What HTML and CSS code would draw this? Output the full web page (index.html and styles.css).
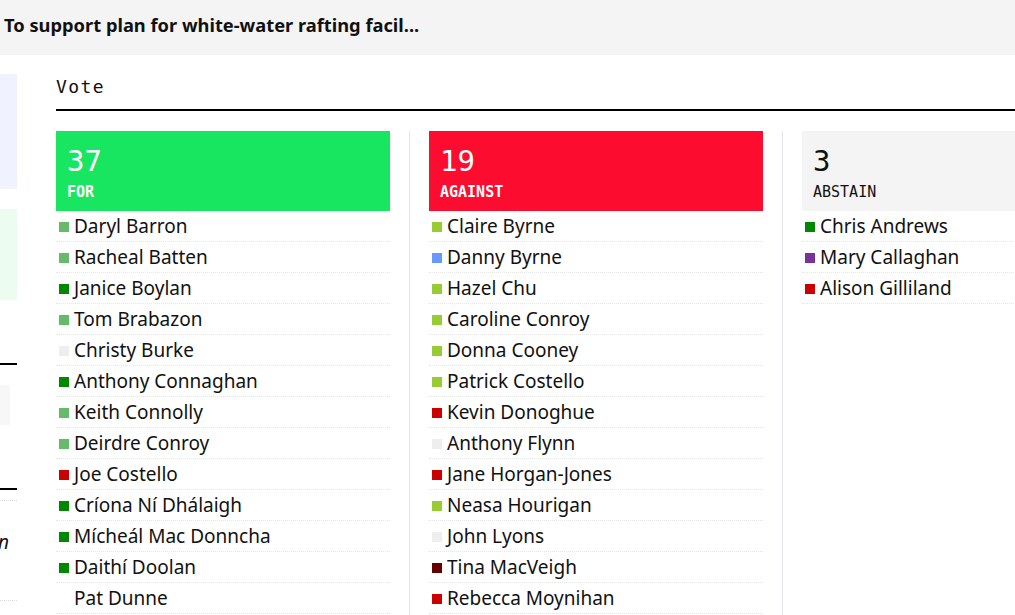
FILE: index.html
```html
<!DOCTYPE html>
<html lang="en">
<head>
<meta charset="utf-8">
<title>Vote</title>
<link rel="stylesheet" href="styles.css">
</head>
<body>
<header class="topbar">
  <h1 class="topbar-title">To support plan for white-water rafting facil...</h1>
</header>
<div class="layout">
  <aside class="side">
    <div class="side-inner">
      <div class="side-box side-box-blue"></div>
      <div class="side-box side-box-green"></div>
      <div class="side-rule"></div>
      <div class="side-chip"></div>
      <div class="side-rule side-rule-2"></div>
      <div class="side-item"><span class="side-text">Councillor Dublin</span></div>
      <div class="side-item side-item-empty"></div>
    </div>
  </aside>
  <main class="content">
    <h2 class="vote-title">Vote</h2>
    <div class="cols">
      <section class="col">
        <div class="col-head head-for">
          <div class="count">37</div>
          <div class="label">FOR</div>
        </div>
        <ul class="names">
          <li class="name"><span class="mark m-lgreen"></span>Daryl Barron</li>
          <li class="name"><span class="mark m-lgreen"></span>Racheal Batten</li>
          <li class="name"><span class="mark m-dgreen"></span>Janice Boylan</li>
          <li class="name"><span class="mark m-lgreen"></span>Tom Brabazon</li>
          <li class="name"><span class="mark m-gray"></span>Christy Burke</li>
          <li class="name"><span class="mark m-dgreen"></span>Anthony Connaghan</li>
          <li class="name"><span class="mark m-lgreen"></span>Keith Connolly</li>
          <li class="name"><span class="mark m-lgreen"></span>Deirdre Conroy</li>
          <li class="name"><span class="mark m-red"></span>Joe Costello</li>
          <li class="name"><span class="mark m-dgreen"></span>Críona Ní Dhálaigh</li>
          <li class="name"><span class="mark m-dgreen"></span>Mícheál Mac Donncha</li>
          <li class="name"><span class="mark m-dgreen"></span>Daithí Doolan</li>
          <li class="name"><span class="mark m-none"></span>Pat Dunne</li>
        </ul>
      </section>
      <section class="col">
        <div class="col-head head-against">
          <div class="count">19</div>
          <div class="label">AGAINST</div>
        </div>
        <ul class="names">
          <li class="name"><span class="mark m-lime"></span>Claire Byrne</li>
          <li class="name"><span class="mark m-blue"></span>Danny Byrne</li>
          <li class="name"><span class="mark m-lime"></span>Hazel Chu</li>
          <li class="name"><span class="mark m-lime"></span>Caroline Conroy</li>
          <li class="name"><span class="mark m-lime"></span>Donna Cooney</li>
          <li class="name"><span class="mark m-lime"></span>Patrick Costello</li>
          <li class="name"><span class="mark m-red"></span>Kevin Donoghue</li>
          <li class="name"><span class="mark m-gray"></span>Anthony Flynn</li>
          <li class="name"><span class="mark m-red"></span>Jane Horgan-Jones</li>
          <li class="name"><span class="mark m-lime"></span>Neasa Hourigan</li>
          <li class="name"><span class="mark m-gray"></span>John Lyons</li>
          <li class="name"><span class="mark m-dred"></span>Tina MacVeigh</li>
          <li class="name"><span class="mark m-red"></span>Rebecca Moynihan</li>
        </ul>
      </section>
      <section class="col">
        <div class="col-head head-abstain">
          <div class="count">3</div>
          <div class="label">ABSTAIN</div>
        </div>
        <ul class="names">
          <li class="name"><span class="mark m-dgreen"></span>Chris Andrews</li>
          <li class="name"><span class="mark m-purple"></span>Mary Callaghan</li>
          <li class="name"><span class="mark m-red"></span>Alison Gilliland</li>
        </ul>
      </section>
    </div>
  </main>
</div>
</body>
</html>
```
FILE: styles.css
```css
html, body {
  margin: 0;
  padding: 0;
  background: #ffffff;
  overflow: hidden;
}
body {
  width: 1015px;
  height: 615px;
  font-family: "Noto Sans", "Liberation Sans", sans-serif;
  color: #111111;
}
.topbar {
  background: #f4f4f4;
  height: 55px;
  padding: 0 4px;
  display: flex;
  align-items: center;
}
.topbar-title {
  margin: 0 0 7px 0;
  font-size: 18.3px;
  font-weight: 700;
  color: #111;
  white-space: nowrap;
}
.layout {
  display: flex;
  align-items: flex-start;
}
.side {
  width: 17px;
  flex: 0 0 17px;
  overflow: hidden;
  margin-right: 39px;
  padding-top: 19px;
}
.side-inner {
  width: 300px;
  margin-left: -283px;
  display: flex;
  flex-direction: column;
}
.side-box {
  width: 100%;
}
.side-box-blue {
  background: #f0f2ff;
  height: 115px;
}
.side-box-green {
  background: #edfcf1;
  height: 91px;
  margin-top: 20px;
}
.side-rule {
  height: 2px;
  background: #000;
  margin-top: 63px;
}
.side-rule-2 {
  margin-top: 63px;
}
.side-chip {
  height: 40px;
  width: 293px;
  background: #f7f7f7;
  margin-top: 20px;
}
.side-item {
  border-top: 1px dotted #dddddd;
  margin-top: 10px;
  height: 100px;
  box-sizing: border-box;
  padding-top: 28px;
  display: flex;
  align-items: flex-start;
  justify-content: flex-end;
}
.side-item-empty {
  margin-top: 0;
}
.side-text {
  font-style: italic;
  font-size: 19px;
  padding-right: 8px;
}
.content {
  flex: 0 0 auto;
  width: 1200px;
}
.vote-title {
  margin: 0;
  height: 56px;
  box-sizing: border-box;
  padding-top: 21px;
  font-family: "DejaVu Sans Mono", "Liberation Mono", monospace;
  font-weight: 400;
  font-size: 18px;
  letter-spacing: 1.4px;
  color: #111;
  border-bottom: 2px solid #000;
}
.cols {
  display: flex;
  margin-top: 20px;
}
.col {
  width: 334px;
  flex: 0 0 334px;
  padding-right: 19px;
  border-right: 1px solid #e4e4f0;
  margin-right: 19px;
  min-height: 500px;
}
.col-head {
  height: 80px;
  box-sizing: border-box;
  padding: 14px 11px 0;
  font-family: "DejaVu Sans Mono", "Liberation Mono", monospace;
}
.head-for { background: #19e660; color: #fff; }
.head-against { background: #fc0d2f; color: #fff; }
.head-abstain { background: #f4f4f4; color: #111; }
.head-abstain .label { font-weight: 400; }
.count {
  font-size: 29px;
  line-height: 32px;
}
.label {
  font-size: 15px;
  font-weight: 700;
  margin-top: 6px;
  line-height: 18px;
}
.names {
  list-style: none;
  margin: 0;
  padding: 0;
}
.name {
  height: 31px;
  box-sizing: border-box;
  border-bottom: 1px dotted #e6e6e6;
  display: flex;
  align-items: center;
  font-size: 19px;
  white-space: nowrap;
  color: #111;
}
.mark {
  width: 10px;
  height: 10px;
  margin: 2px 5px 0 3px;
  flex: 0 0 10px;
}
.m-lgreen { background: #66bb6a; }
.m-dgreen { background: #008800; }
.m-gray { background: #eeeeee; }
.m-red { background: #cc0000; }
.m-lime { background: #99cc33; }
.m-blue { background: #6699ff; }
.m-dred { background: #660000; }
.m-purple { background: #773399; }
.m-none { background: transparent; }
```
